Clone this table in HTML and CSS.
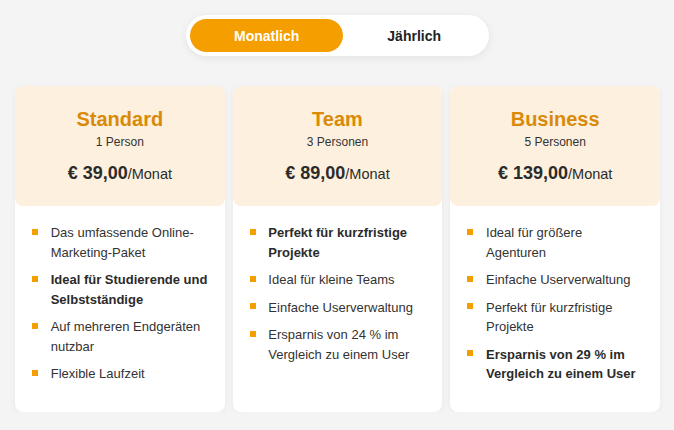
FILE: index.html
```html
<!DOCTYPE html>
<html lang="de">
<head>
<meta charset="utf-8">
<title>Preise</title>
<link rel="stylesheet" href="styles.css">
</head>
<body>
<div class="page">
  <div class="toggle-wrap">
    <div class="toggle">
      <button class="toggle-btn active">Monatlich</button>
      <button class="toggle-btn">Jährlich</button>
    </div>
  </div>
  <div class="plans">
    <div class="card">
      <div class="card-head">
        <h2 class="plan-name">Standard</h2>
        <div class="plan-users">1 Person</div>
        <div class="plan-price"><span class="amount">€ 39,00</span><span class="unit">/Monat</span></div>
      </div>
      <ul class="features">
        <li>Das umfassende Online-Marketing-Paket</li>
        <li class="strong">Ideal für Studierende und Selbstständige</li>
        <li>Auf mehreren Endgeräten nutzbar</li>
        <li>Flexible Laufzeit</li>
      </ul>
    </div>
    <div class="card">
      <div class="card-head">
        <h2 class="plan-name">Team</h2>
        <div class="plan-users">3 Personen</div>
        <div class="plan-price"><span class="amount">€ 89,00</span><span class="unit">/Monat</span></div>
      </div>
      <ul class="features">
        <li class="strong">Perfekt für kurzfristige Projekte</li>
        <li>Ideal für kleine Teams</li>
        <li>Einfache Userverwaltung</li>
        <li>Ersparnis von 24 % im Vergleich zu einem User</li>
      </ul>
    </div>
    <div class="card">
      <div class="card-head">
        <h2 class="plan-name">Business</h2>
        <div class="plan-users">5 Personen</div>
        <div class="plan-price"><span class="amount">€ 139,00</span><span class="unit">/Monat</span></div>
      </div>
      <ul class="features">
        <li>Ideal für größere Agenturen</li>
        <li>Einfache Userverwaltung</li>
        <li>Perfekt für kurzfristige Projekte</li>
        <li class="strong">Ersparnis von 29 % im Vergleich zu einem User</li>
      </ul>
    </div>
  </div>
</div>
</body>
</html>
```

FILE: styles.css
```css
* { box-sizing: border-box; }

html, body {
  margin: 0;
  padding: 0;
  background: #f4f4f4;
}

body {
  font-family: "Liberation Sans", Arial, Helvetica, sans-serif;
  color: #2b2b2b;
}

.page {
  padding: 15px 14px 0 15px;
}

.toggle-wrap {
  display: flex;
  justify-content: center;
}

.toggle {
  display: flex;
  padding: 4px;
  height: 41px;
  background: #ffffff;
  border-radius: 21px;
  box-shadow: 0 2px 8px rgba(0, 0, 0, 0.07);
}

.toggle-btn {
  border: 0;
  background: transparent;
  font-family: inherit;
  font-size: 14px;
  font-weight: 700;
  color: #222222;
  padding: 0 44px;
  height: 33px;
  border-radius: 17px;
  cursor: pointer;
}

.toggle-btn.active {
  background: #f59e00;
  color: #ffffff;
}

.plans {
  display: grid;
  grid-template-columns: repeat(3, 1fr);
  gap: 8px;
  margin-top: 30px;
}

.card {
  background: #ffffff;
  border-radius: 8px;
  box-shadow: 0 1px 6px rgba(0, 0, 0, 0.05);
  overflow: hidden;
  height: 326px;
}

.card-head {
  background: #fdf0de;
  border-radius: 8px;
  text-align: center;
  padding: 21px 10px 21px;
  height: 120px;
}

.plan-name {
  margin: 0;
  font-size: 20px;
  line-height: 24px;
  font-weight: 700;
  color: #d98a08;
}

.plan-users {
  margin-top: 3px;
  font-size: 12px;
  line-height: 16px;
  color: #333333;
}

.plan-price {
  margin-top: 11px;
  line-height: 24px;
  color: #2b2b2b;
}

.amount {
  font-size: 18px;
  font-weight: 700;
}

.unit {
  font-size: 14.5px;
}

.features {
  list-style: none;
  margin: 0;
  padding: 17px 16.5px 30px 17px;
  font-size: 13px;
  line-height: 19.5px;
  color: #333333;
}

.features li {
  display: flex;
  gap: 12.7px;
  margin-bottom: 8px;
}

.features li:last-child {
  margin-bottom: 0;
}

.features li::before {
  content: "";
  flex: 0 0 6px;
  width: 6px;
  height: 6px;
  margin-top: 5.5px;
  background: #f59e00;
}

.features li.strong {
  font-weight: 700;
  color: #2b2b2b;
}
```
